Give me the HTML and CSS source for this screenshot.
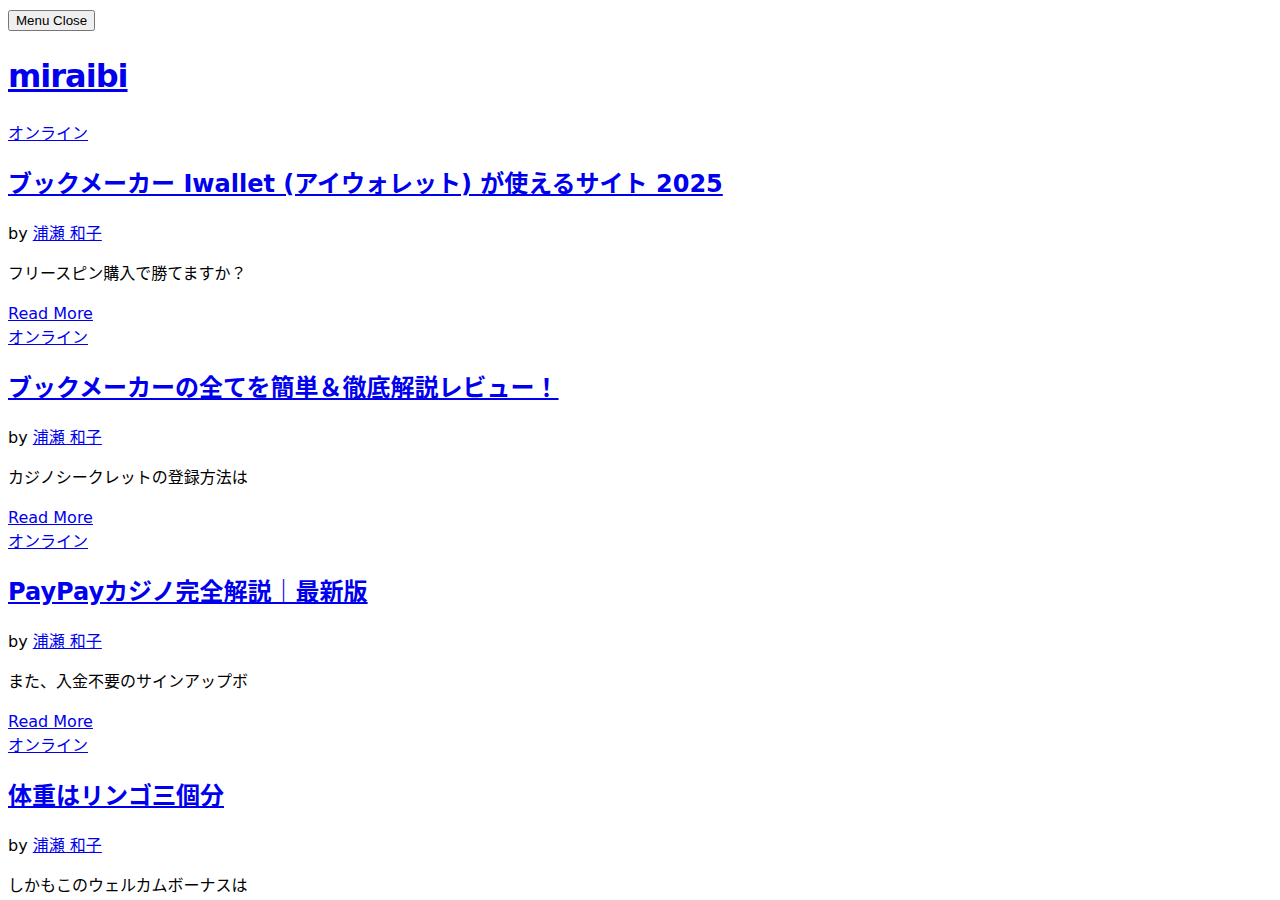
FILE: index.html
```html
<!DOCTYPE html>
<html lang="ja">
<head>
<meta charset="utf-8">
<title>miraibi</title>
<link rel="stylesheet" href="styles.css">
</head>
<body>
<button class="menu-toggle" type="button">Menu Close</button>
<header class="site-header">
  <h1 class="site-title"><a href="#">miraibi</a></h1>
</header>
<main class="post-list">
  <article class="post">
    <div class="post-cat"><a href="#">オンライン</a></div>
    <h2 class="post-title"><a href="#">ブックメーカー Iwallet (アイウォレット) が使えるサイト 2025</a></h2>
    <p class="post-meta">by <a href="#">浦瀬 和子</a></p>
    <p class="post-excerpt">フリースピン購入で勝てますか？</p>
    <a class="read-more" href="#">Read More</a>
  </article>
  <article class="post">
    <div class="post-cat"><a href="#">オンライン</a></div>
    <h2 class="post-title"><a href="#">ブックメーカーの全てを簡単＆徹底解説レビュー！</a></h2>
    <p class="post-meta">by <a href="#">浦瀬 和子</a></p>
    <p class="post-excerpt">カジノシークレットの登録方法は</p>
    <a class="read-more" href="#">Read More</a>
  </article>
  <article class="post">
    <div class="post-cat"><a href="#">オンライン</a></div>
    <h2 class="post-title"><a href="#">PayPayカジノ完全解説｜最新版</a></h2>
    <p class="post-meta">by <a href="#">浦瀬 和子</a></p>
    <p class="post-excerpt">また、入金不要のサインアップボ</p>
    <a class="read-more" href="#">Read More</a>
  </article>
  <article class="post">
    <div class="post-cat"><a href="#">オンライン</a></div>
    <h2 class="post-title"><a href="#">体重はリンゴ三個分</a></h2>
    <p class="post-meta">by <a href="#">浦瀬 和子</a></p>
    <p class="post-excerpt">しかもこのウェルカムボーナスは</p>
    <a class="read-more" href="#">Read More</a>
  </article>
</main>
</body>
</html>
```
FILE: styles.css
```css
body {
  margin: 8px;
  font-family: "DejaVu Sans", "Noto Sans CJK JP", sans-serif;
  font-size: 16px;
  line-height: 1.5;
  color: #000;
  background: #fff;
}

a {
  color: #0000ee;
}

.menu-toggle {
  font-family: "Liberation Sans", Arial, sans-serif;
  font-size: 13.333px;
  line-height: normal;
  margin: 2px 0 0;
}

.site-title {
  font-size: 32px;
  letter-spacing: -1px;
  margin: 20px 0 22px;
}

.post-title {
  font-size: 24px;
  margin: 20px 0;
}

.post-meta,
.post-excerpt {
  margin: 16px 0;
}

.read-more {
  display: block;
  width: max-content;
}
```
